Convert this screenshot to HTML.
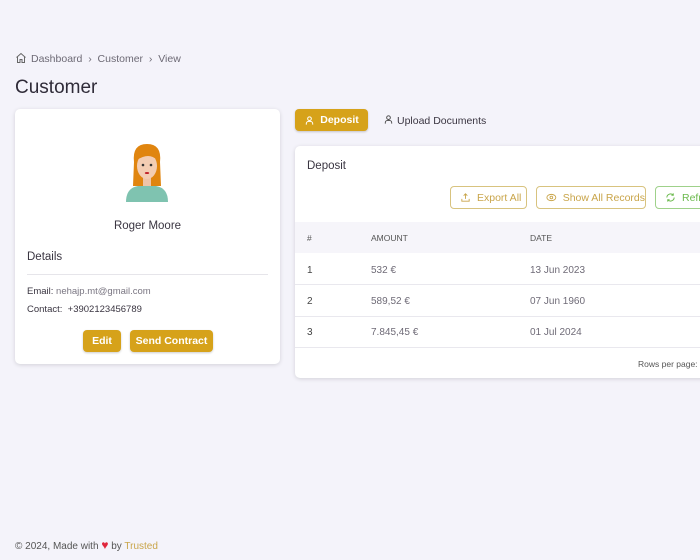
<!DOCTYPE html>
<html><head><meta charset="utf-8"><style>
*{box-sizing:border-box;margin:0;padding:0}
body{width:700px;height:560px;overflow:hidden;background:#f4f3fa;font-family:"Liberation Sans",sans-serif;color:#3a3541;position:relative}
.a{position:absolute;white-space:nowrap}
.card{background:#fff;border-radius:5px;box-shadow:0 1px 4px rgba(0,0,0,.14)}
.btn{background:#d6a21a;color:#fff;border-radius:4px;font-size:10.5px;font-weight:bold;display:flex;align-items:center;justify-content:center;box-shadow:0 1px 2px rgba(0,0,0,.2)}
.ob{border:1px solid #d8c37f;border-radius:4px;color:#c9a54a;font-size:10.5px;display:flex;align-items:center;padding-left:9px;gap:6px;height:23px}
.t{font-size:10px;color:#6f6b77}
</style></head><body>
<svg class="a" style="left:15px;top:52px" width="12" height="12" viewBox="0 0 24 24" fill="none" stroke="#666" stroke-width="2"><path d="M3 11l9-8 9 8M5 9v12h5v-6h4v6h5V9"/></svg>
<div class="a" style="left:31px;top:53px;font-size:10.5px;color:#6d6a75">Dashboard &nbsp;›&nbsp; Customer &nbsp;›&nbsp; View</div>
<div class="a" style="left:15px;top:77px;font-size:19px;color:#2f2b38">Customer</div>

<div class="a card" style="left:15px;top:109px;width:265px;height:255px">
<svg class="a" style="left:109px;top:33px" width="46" height="62" viewBox="0 0 46 62">
<path d="M10 20 Q8 2 23 2 Q38 2 36 20 L37 44 L9 44 Z" fill="#e0850f"/>
<path d="M2 60 Q2 46 14 44 L32 44 Q44 46 44 60 Z" fill="#7fc3b0"/>
<rect x="19" y="34" width="8" height="10" fill="#efc4a8"/>
<ellipse cx="23" cy="24" rx="10" ry="13" fill="#f3cdb3"/>
<path d="M13 18 Q16 6 30 8 Q34 12 33 18 Q25 10 13 18Z" fill="#e0850f"/>
<circle cx="19" cy="23" r="1.3" fill="#333"/><circle cx="27" cy="23" r="1.3" fill="#333"/>
<ellipse cx="23" cy="31" rx="2.2" ry="1" fill="#c0202a"/>
</svg>
<div class="a" style="left:0;width:265px;top:111px;text-align:center;font-size:11.5px">Roger Moore</div>
<div class="a" style="left:12px;top:142px;font-size:11.5px">Details</div>
<div class="a" style="left:12px;right:12px;top:165px;border-top:1px solid #e6e5ea"></div>
<div class="a" style="left:12px;top:177px;font-size:9.5px">Email: <span style="color:#7a7682">nehajp.mt@gmail.com</span></div>
<div class="a" style="left:12px;top:195px;font-size:9.5px">Contact: &nbsp;+3902123456789</div>
<div class="a btn" style="left:68px;top:221px;width:38px;height:22px">Edit</div>
<div class="a btn" style="left:115px;top:221px;width:83px;height:22px">Send Contract</div>
</div>

<div class="a btn" style="left:295px;top:109px;width:73px;height:22px"><svg width="11" height="11" viewBox="0 0 24 24" fill="none" stroke="#fff" stroke-width="2.2" style="margin-right:5px"><circle cx="12" cy="8" r="4"/><path d="M5 21v-2a5 5 0 015-5h4a5 5 0 015 5v2"/></svg>Deposit</div>
<svg class="a" style="left:383px;top:114px" width="11" height="11" viewBox="0 0 24 24" fill="none" stroke="#444" stroke-width="2"><circle cx="12" cy="8" r="4"/><path d="M5 21v-2a5 5 0 015-5h4a5 5 0 015 5v2"/></svg>
<div class="a" style="left:397px;top:115px;font-size:10.5px">Upload Documents</div>

<div class="a card" style="left:295px;top:146px;width:420px;height:232px;overflow:hidden">
<div class="a" style="left:12px;top:14px;font-size:11.5px">Deposit</div>
<div class="a ob" style="left:155px;top:40px;width:77px"><svg width="11" height="11" viewBox="0 0 24 24" fill="none" stroke="#c9a54a" stroke-width="2"><path d="M4 15v5h16v-5M12 15V4M8 8l4-4 4 4"/></svg>Export All</div>
<div class="a ob" style="left:241px;top:40px;width:110px"><svg width="11" height="11" viewBox="0 0 24 24" fill="none" stroke="#c9a54a" stroke-width="2"><ellipse cx="12" cy="12" rx="10" ry="7"/><circle cx="12" cy="12" r="3"/></svg>Show All Records</div>
<div class="a ob" style="left:360px;top:40px;width:80px;border-color:#9fd18a;color:#6cba4e"><svg width="11" height="11" viewBox="0 0 24 24" fill="none" stroke="#6cba4e" stroke-width="2.2"><path d="M20 12a8 8 0 01-14 5M4 12a8 8 0 0114-5M18 3v4h-4M6 21v-4h4"/></svg>Refresh</div>
<div class="a" style="left:0;right:0;top:76px;height:31px;background:#f6f5fa"></div>
<div class="a" style="left:12px;top:87px;font-size:8.5px;color:#555">#</div>
<div class="a" style="left:76px;top:87px;font-size:8.5px;color:#555">AMOUNT</div>
<div class="a" style="left:235px;top:87px;font-size:8.5px;color:#555">DATE</div>
<div class="a" style="left:0;right:0;top:138px;border-top:1px solid #e9e8ee"></div>
<div class="a" style="left:0;right:0;top:170px;border-top:1px solid #e9e8ee"></div>
<div class="a" style="left:0;right:0;top:201px;border-top:1px solid #e9e8ee"></div>
<div class="a t" style="left:12px;top:119px;color:#444">1</div><div class="a t" style="left:76px;top:119px">532 €</div><div class="a t" style="left:235px;top:119px">13 Jun 2023</div>
<div class="a t" style="left:12px;top:150px;color:#444">2</div><div class="a t" style="left:76px;top:150px">589,52 €</div><div class="a t" style="left:235px;top:150px">07 Jun 1960</div>
<div class="a t" style="left:12px;top:181px;color:#444">3</div><div class="a t" style="left:76px;top:181px">7.845,45 €</div><div class="a t" style="left:235px;top:181px">01 Jul 2024</div>
<div class="a" style="left:343px;top:213px;font-size:8.5px;color:#555">Rows per page:</div>
</div>

<div class="a" style="left:15px;top:538px;font-size:10px;color:#555">© 2024, Made with <span style="color:#e0263c;font-size:12px">♥</span> by <span style="color:#c9a54a">Trusted</span></div>
</body></html>
